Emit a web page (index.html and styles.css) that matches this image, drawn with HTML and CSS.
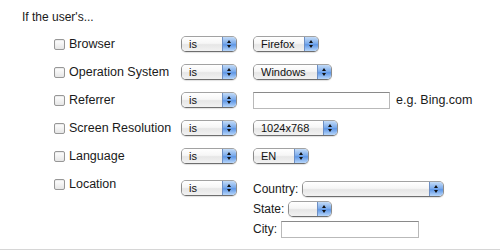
FILE: index.html
```html
<!DOCTYPE html>
<html lang="en">
<head>
    <meta charset="UTF-8">
    <title>Targeting rules</title>
    <link rel="stylesheet" href="styles.css">
</head>
<body>
    <div class="panel">
        <p class="title">If the user's...</p>

        <div class="rules">
            <div class="rule">
                <label class="check"><span class="box"></span>Browser</label>
                <div class="select w-is"><span class="value">is</span><span class="arrows"></span></div>
                <div class="field">
                    <div class="select w-browser"><span class="value">Firefox</span><span class="arrows"></span></div>
                </div>
            </div>

            <div class="rule">
                <label class="check"><span class="box"></span>Operation System</label>
                <div class="select w-is"><span class="value">is</span><span class="arrows"></span></div>
                <div class="field">
                    <div class="select w-os"><span class="value">Windows</span><span class="arrows"></span></div>
                </div>
            </div>

            <div class="rule">
                <label class="check"><span class="box"></span>Referrer</label>
                <div class="select w-is"><span class="value">is</span><span class="arrows"></span></div>
                <div class="field">
                    <span class="text-input w-ref"></span>
                    <span class="hint">e.g. Bing.com</span>
                </div>
            </div>

            <div class="rule">
                <label class="check"><span class="box"></span>Screen Resolution</label>
                <div class="select w-is"><span class="value">is</span><span class="arrows"></span></div>
                <div class="field">
                    <div class="select w-res"><span class="value">1024x768</span><span class="arrows"></span></div>
                </div>
            </div>

            <div class="rule">
                <label class="check"><span class="box"></span>Language</label>
                <div class="select w-is"><span class="value">is</span><span class="arrows"></span></div>
                <div class="field">
                    <div class="select w-lang"><span class="value">EN</span><span class="arrows"></span></div>
                </div>
            </div>

            <div class="rule rule-location">
                <label class="check"><span class="box"></span>Location</label>
                <div class="select w-is"><span class="value">is</span><span class="arrows"></span></div>
                <div class="location">
                    <div class="loc-line first">
                        <span>Country:</span>
                        <div class="select w-country"><span class="value"></span><span class="arrows"></span></div>
                    </div>
                    <div class="loc-line">
                        <span>State:</span>
                        <div class="select w-state"><span class="value"></span><span class="arrows"></span></div>
                    </div>
                    <div class="loc-line">
                        <span>City:</span>
                        <span class="text-input w-city"></span>
                    </div>
                </div>
            </div>
        </div>
    </div>
</body>
</html>
```

FILE: styles.css
```css
* {
    margin: 0;
    padding: 0;
    box-sizing: border-box;
}

body {
    font-family: "Liberation Sans", Arial, sans-serif;
    font-size: 12px;
    color: #1a1a1a;
    background: #fff;
}

.panel {
    height: 250px;
    border-bottom: 1px solid #d6d6d6;
}

.title {
    padding: 9px 0 0 22px;
    line-height: 16px;
    height: 30px;
}

.rules {
    padding-left: 54px;
}

.rule {
    display: grid;
    grid-template-columns: 127px 72px auto;
    align-items: center;
    height: 28px;
}

.check {
    display: flex;
    align-items: center;
    gap: 4px;
    font-size: 12.5px;
}

.box {
    width: 11px;
    height: 11px;
    border: 1px solid #979797;
    border-radius: 2px;
    background: linear-gradient(#ffffff, #e6e6e6);
    box-shadow: inset 0 1px 1px rgba(0,0,0,0.08);
}

.select {
    display: flex;
    height: 16px;
    border: 1px solid #8c8c8c;
    border-top-color: #a2a2a2;
    border-bottom-color: #6e6e6e;
    border-radius: 5px;
    overflow: hidden;
    font-size: 11px;
    line-height: 14px;
    color: #111;
    box-shadow: 0 1px 1px rgba(0,0,0,0.12);
}

.select .value {
    flex: 1;
    padding-left: 7px;
    background: linear-gradient(#ffffff 0%, #f6f6f6 45%, #e6e6e6 55%, #f2f2f2 100%);
}

.select .arrows {
    position: relative;
    width: 14px;
    border-left: 1px solid #6d8fc4;
    background: linear-gradient(#c3dbf7 0%, #7eadec 45%, #5f97e6 55%, #b7d6fa 100%);
}

.select .arrows::before,
.select .arrows::after {
    content: "";
    position: absolute;
    left: 4px;
    border-left: 2.5px solid transparent;
    border-right: 2.5px solid transparent;
}

.select .arrows::before {
    top: 3px;
    border-bottom: 3px solid #111;
}

.select .arrows::after {
    top: 8px;
    border-top: 3px solid #111;
}

.w-is { width: 56px; }
.w-browser { width: 66px; }
.w-os { width: 79px; }
.w-res { width: 85px; }
.w-lang { width: 56px; }
.w-country { width: 142px; }
.w-state { width: 44px; }

.field {
    display: flex;
    align-items: center;
    gap: 6px;
}

.text-input {
    display: block;
    height: 17px;
    border: 1px solid #b9b9b9;
    border-top-color: #8a8a8a;
    background: #fff;
}

.w-ref { width: 137px; }
.w-city { width: 138px; }

.hint {
    font-size: 12.5px;
}

.rule-location {
    align-items: start;
}

.rule-location .check {
    margin-top: 7px;
}

.rule-location .w-is {
    margin-top: 10px;
}

.location {
    display: flex;
    flex-direction: column;
}

.loc-line {
    display: flex;
    align-items: center;
    gap: 4px;
    height: 20px;
}

.loc-line.first {
    margin-top: 8px;
    height: 21px;
}
```
